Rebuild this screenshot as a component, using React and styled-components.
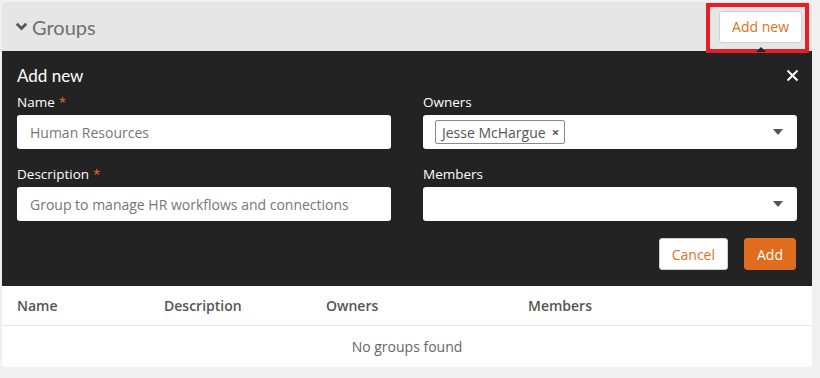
import React from "react";
import styled, { createGlobalStyle } from "styled-components";

const GlobalStyle = createGlobalStyle`
  body {
    margin: 0;
    background: #f0f0f0;
    font-family: "Open Sans", "Liberation Sans", sans-serif;
  }
`;

const Page = styled.div`
  padding: 2px;
  width: 810px;
`;

const Card = styled.section`
  border-radius: 4px;
  background: #fff;
`;

const Header = styled.header`
  height: 49px;
  display: flex;
  align-items: center;
  justify-content: space-between;
  padding: 0 10px 0 13px;
  background: #e6e6e6;
  border-radius: 4px 4px 0 0;
`;

const Title = styled.h2`
  margin: 0;
  display: flex;
  align-items: center;
  gap: 4px;
  font-family: "Lato", "Open Sans", sans-serif;
  font-weight: 400;
  font-size: 20px;
  color: #6f6f6f;
`;

const Highlight = styled.div`
  position: relative;

  &::before {
    content: "";
    position: absolute;
    left: -13px;
    right: -7px;
    top: -8px;
    bottom: -10px;
    border: 4px solid #ec1c24;
    pointer-events: none;
  }

  &::after {
    content: "";
    position: absolute;
    left: 37px;
    bottom: -9px;
    border: 5px solid transparent;
    border-bottom-color: #232323;
  }
`;

const Button = styled.button`
  height: 32px;
  padding: 0 12px;
  border-radius: 3px;
  border: 1px solid ${(p) => (p.$primary ? "#e06d1d" : "#cfcfcf")};
  background: ${(p) => (p.$primary ? "#e06d1d" : "#fff")};
  color: ${(p) => (p.$primary ? "#fff" : "#e07020")};
  font-family: "Open Sans", sans-serif;
  font-size: 14px;
  cursor: pointer;
`;

const Panel = styled.div`
  background: #232323;
  padding: 12px 15px 16px;
  color: #fff;
`;

const PanelHead = styled.div`
  display: flex;
  align-items: center;
  justify-content: space-between;
  height: 24px;
`;

const PanelTitle = styled.h3`
  margin: 0;
  font-family: "Lato", "Open Sans", sans-serif;
  font-weight: 400;
  font-size: 17px;
`;

const Close = styled.button`
  border: 0;
  background: none;
  padding: 0;
  margin-right: -2px;
  display: flex;
  cursor: pointer;
`;

const FormGrid = styled.div`
  display: grid;
  grid-template-columns: 1fr 1fr;
  column-gap: 32px;
  row-gap: 15px;
  margin-top: 5px;
`;

const Field = styled.label`
  display: flex;
  flex-direction: column;
  gap: 3px;
`;

const Label = styled.span`
  font-size: 13.5px;
  font-weight: 500;
  line-height: 20px;
  color: #fff;
`;

const Required = styled.span`
  color: #e07020;
  margin-left: 4px;
`;

const Input = styled.div`
  height: 34px;
  box-sizing: border-box;
  background: #fff;
  border-radius: 3px;
  padding: 0 13px;
  display: flex;
  align-items: center;
  font-size: 14px;
  color: #777;
`;

const Select = styled(Input)`
  padding: 0 14px 0 12px;
  justify-content: space-between;
`;

const Tag = styled.span`
  display: inline-flex;
  align-items: center;
  gap: 6px;
  height: 22px;
  padding: 0 5px 0 6px;
  border: 1px solid #8a8a8a;
  border-radius: 2px;
  color: #555;
  font-size: 14px;
`;

const TagRemove = styled.span`
  font-size: 13px;
  font-weight: 700;
  color: #555;
`;

const Caret = styled.span`
  width: 0;
  height: 0;
  border-left: 5px solid transparent;
  border-right: 5px solid transparent;
  border-top: 6px solid #555;
`;

const Actions = styled.div`
  display: flex;
  justify-content: flex-end;
  gap: 16px;
  margin-top: 17px;
  padding-right: 1px;
`;

const Table = styled.div`
  border-radius: 0 0 4px 4px;
`;

const Row = styled.div`
  display: grid;
  grid-template-columns: 147px 162px 202px 1fr;
  align-items: center;
  padding: 0 15px;
  height: ${(p) => (p.$head ? "39px" : "41px")};
  border-bottom: ${(p) => (p.$head ? "1px solid #e6e6e6" : "none")};
`;

const HeadCell = styled.div`
  font-size: 14px;
  font-weight: 600;
  color: #555;
`;

const Empty = styled.div`
  grid-column: 1 / -1;
  text-align: center;
  font-size: 14px;
  color: #666;
`;

const Chevron = () => (
  <svg width="13" height="13" viewBox="0 0 13 13">
    <path d="M1.8 3.8 L6.5 8.5 L11.2 3.8" fill="none" stroke="#555" strokeWidth="2.8" />
  </svg>
);

const CloseIcon = () => (
  <svg width="13" height="13" viewBox="0 0 13 13">
    <path d="M1.5 1.5 L11.5 11.5 M11.5 1.5 L1.5 11.5" stroke="#fff" strokeWidth="2" />
  </svg>
);

export default function App() {
  return (
    <>
      <GlobalStyle />
      <Page>
        <Card>
          <Header>
            <Title>
              <Chevron />
              Groups
            </Title>
            <Highlight>
              <Button>Add new</Button>
            </Highlight>
          </Header>
          <Panel>
            <PanelHead>
              <PanelTitle>Add new</PanelTitle>
              <Close aria-label="Close">
                <CloseIcon />
              </Close>
            </PanelHead>
            <FormGrid>
              <Field>
                <Label>
                  Name<Required>*</Required>
                </Label>
                <Input>Human Resources</Input>
              </Field>
              <Field>
                <Label>Owners</Label>
                <Select>
                  <Tag>
                    Jesse McHargue <TagRemove>×</TagRemove>
                  </Tag>
                  <Caret />
                </Select>
              </Field>
              <Field>
                <Label>
                  Description<Required>*</Required>
                </Label>
                <Input>Group to manage HR workflows and connections</Input>
              </Field>
              <Field>
                <Label>Members</Label>
                <Select>
                  <span />
                  <Caret />
                </Select>
              </Field>
            </FormGrid>
            <Actions>
              <Button>Cancel</Button>
              <Button $primary>Add</Button>
            </Actions>
          </Panel>
          <Table>
            <Row $head>
              <HeadCell>Name</HeadCell>
              <HeadCell>Description</HeadCell>
              <HeadCell>Owners</HeadCell>
              <HeadCell>Members</HeadCell>
            </Row>
            <Row>
              <Empty>No groups found</Empty>
            </Row>
          </Table>
        </Card>
      </Page>
    </>
  );
}
